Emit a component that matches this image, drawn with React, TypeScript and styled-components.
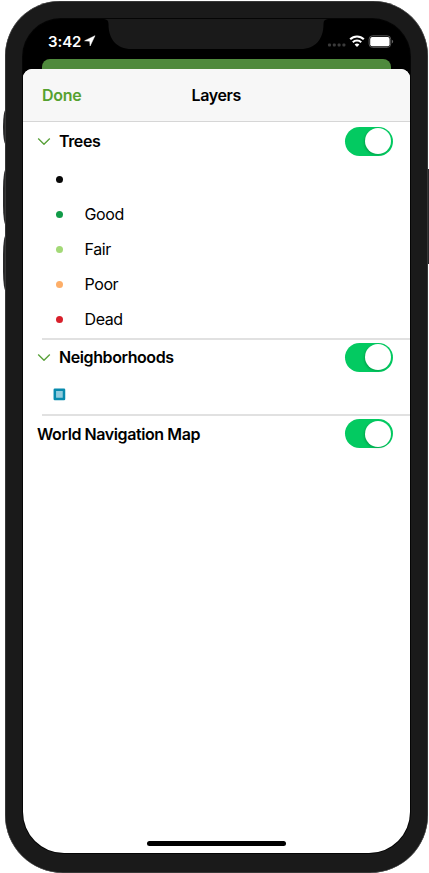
import React from "react";
import styled, { createGlobalStyle } from "styled-components";

const Global = createGlobalStyle`
  *, *::before, *::after { box-sizing: border-box; }
  body {
    margin: 0;
    background: #fff;
    font-family: Inter, "Liberation Sans", sans-serif;
    color: #000;
    overflow: hidden;
  }
`;

const Stage = styled.div`
  position: relative;
  width: 429px;
  height: 873px;
  padding: 1px 1px 0 5px;
  overflow: hidden;
`;

const SideButton = styled.span<{ $side: "left" | "right"; $top: number; $height: number }>`
  position: absolute;
  ${(p) => (p.$side === "left" ? "left: 3px;" : "right: 0;")}
  top: ${(p) => p.$top}px;
  width: 5px;
  height: ${(p) => p.$height}px;
  background: #29292a;
  border-radius: ${(p) => (p.$side === "left" ? "3px 0 0 3px / 20px 0 0 20px" : "0")};
`;

const Phone = styled.div`
  position: relative;
  height: 872px;
  padding: 18px 18.5px 19px 18px;
  background: #1a1a1a;
  border-radius: 55px 55px 58px 58px;
  box-shadow: inset 0 0 0 0.5px #555;
`;

const Screen = styled.div`
  position: relative;
  display: flex;
  flex-direction: column;
  height: 834px;
  background: #000;
  border-radius: 38px 38px 41px 41px;
  overflow: hidden;
  box-shadow: 0 0 0 1px #050505;
`;

const Notch = styled.svg`
  position: absolute;
  top: 0;
  left: 81px;
  width: 224px;
  height: 30px;
`;

const StatusBar = styled.div`
  display: flex;
  justify-content: space-between;
  height: 40px;
  padding: 14px 15.5px 0 25px;
  color: #fff;
`;

const Clock = styled.div`
  display: flex;
  align-items: center;
  gap: 3px;
  height: 16px;
  font-size: 15px;
  font-weight: 600;
  letter-spacing: -0.1px;
`;

const StatusIcons = styled.div`
  display: flex;
  align-items: center;
  height: 18px;
`;

const BackCard = styled.div`
  flex: none;
  height: 10px;
  margin: 0 18.5px 0 19px;
  background: #4f8a3c;
  border-radius: 8px 8px 0 0;
`;

const Sheet = styled.main`
  display: flex;
  flex: 1;
  flex-direction: column;
  background: #fff;
  border-radius: 9px 9px 0 0;
  overflow: hidden;
`;

const Header = styled.header`
  display: grid;
  grid-template-columns: 1fr auto 1fr;
  align-items: center;
  height: 53px;
  padding: 0 19px;
  background: #f7f7f7;
  border-bottom: 1px solid #d6d6d6;
  font-size: 16px;
  font-weight: 600;
`;

const DoneButton = styled.button`
  justify-self: start;
  padding: 0;
  border: 0;
  background: none;
  color: #56a12f;
  font: inherit;
  letter-spacing: -0.3px;
`;

const Title = styled.h1`
  margin: 0;
  font: inherit;
  letter-spacing: -0.4px;
`;

const Section = styled.section<{ $gap: number }>`
  padding-bottom: ${(p) => p.$gap}px;
`;

const LayerRow = styled.div<{ $height: number; $after?: number }>`
  display: flex;
  align-items: center;
  height: ${(p) => p.$height}px;
  margin-bottom: ${(p) => p.$after ?? 0}px;
  padding: 0 17px 0 14px;
`;

const LayerName = styled.h2`
  flex: 1;
  margin: 0;
  font-size: 16px;
  font-weight: 600;
  line-height: 20px;
  letter-spacing: -0.41px;
`;

const Chevron = styled.svg`
  width: 14px;
  height: 8px;
  margin-right: 8px;
`;

const Switch = styled.button`
  display: flex;
  justify-content: flex-end;
  align-items: center;
  width: 48px;
  height: 29px;
  padding: 0 1.5px;
  border: 0;
  border-radius: 15px;
  background: #03ca61;
`;

const Knob = styled.span`
  width: 26px;
  height: 26px;
  border-radius: 50%;
  background: #fff;
  box-shadow: -1px 1px 2px rgba(0, 60, 20, 0.25);
`;

const LegendRow = styled.div`
  display: flex;
  align-items: center;
  height: 35px;
  padding-left: 30px;
  font-size: 16px;
`;

const SymbolCell = styled.span`
  display: flex;
  justify-content: center;
  width: 13px;
  margin-right: 18.5px;
`;

const Dot = styled.span<{ $color: string }>`
  width: 7px;
  height: 7px;
  border-radius: 50%;
  background: ${(p) => p.$color};
`;

const Label = styled.span`
  padding-bottom: 2px;
  letter-spacing: -0.4px;
`;

const Divider = styled.hr`
  height: 2px;
  margin: 0 0 0 19px;
  border: 0;
  background: #e1e1e1;
`;

const HomeBar = styled.span`
  position: absolute;
  left: 124px;
  bottom: 7px;
  width: 139px;
  height: 5px;
  border-radius: 3px;
  background: #000;
`;

const legend = [
  { label: "", color: "#080808" },
  { label: "Good", color: "#119b48" },
  { label: "Fair", color: "#a3d977" },
  { label: "Poor", color: "#fdae68" },
  { label: "Dead", color: "#d8202b" },
];

const Toggle = ({ name }: { name: string }) => (
  <Switch role="switch" aria-checked="true" aria-label={name}>
    <Knob />
  </Switch>
);

const Expand = () => (
  <Chevron viewBox="0 0 14 8" fill="none" stroke="#59a13a" strokeWidth="1.35">
    <path d="M1.2 1.6 7 7.3l5.8-5.7" />
  </Chevron>
);

export default function App() {
  return (
    <Stage>
      <Global />
      <SideButton $side="left" $top={110} $height={34} />
      <SideButton $side="left" $top={169} $height={56} />
      <SideButton $side="left" $top={235} $height={56} />
      <SideButton $side="right" $top={169} $height={95} />
      <Phone>
        <Screen>
          <Notch viewBox="0 0 224 30">
            <path fill="#1a1a1a" d="M0 0c2.9.2 4.5 1.7 4.5 5 0 15 8 25 23 25h169c15 0 23-10 23-25 0-3.3 1.6-4.8 4.5-5z" />
          </Notch>
          <StatusBar>
            <Clock>
              3:42
              <svg width="12" height="12" viewBox="0 0 12 12" fill="#fff" stroke="#fff" strokeWidth="0.5" strokeLinejoin="round">
                <path d="M.6 5.8 11 .7 6.1 11 5.7 6.2z" />
              </svg>
            </Clock>
            <StatusIcons>
              <svg width="67" height="16" viewBox="0 0 67 16">
                <g fill="#3b3b3b">
                  <rect x="1" y="9.5" width="3" height="3" rx="1" />
                  <rect x="5.8" y="9.5" width="3" height="3" rx="1" />
                  <rect x="10.6" y="9.5" width="3" height="3" rx="1" />
                  <rect x="15.4" y="9.5" width="3" height="3" rx="1" />
                </g>
                <g fill="none" stroke="#fff" strokeWidth="2.1">
                  <path d="M23.2 5.3a9.6 9.6 0 0 1 13.6 0" />
                  <path d="M25.8 8.2a6 6 0 0 1 8.4 0" />
                </g>
                <path fill="#fff" d="M27.6 10.6a3.4 3.4 0 0 1 4.8 0L30 13z" />
                <rect x="42.1" y="1.8" width="21.6" height="11.6" rx="3.4" fill="none" stroke="#555" strokeWidth="1" />
                <rect x="43.2" y="2.9" width="19.4" height="9.4" rx="2" fill="#fff" />
                <path d="M64.9 5.8v3.6c1.7-.6 1.7-3 0-3.6z" fill="#666" />
              </svg>
            </StatusIcons>
          </StatusBar>
          <BackCard />
          <Sheet>
            <Header>
              <DoneButton>Done</DoneButton>
              <Title>Layers</Title>
            </Header>
            <Section $gap={1}>
              <LayerRow $height={38} $after={2}>
                <Expand />
                <LayerName>Trees</LayerName>
                <Toggle name="Trees" />
              </LayerRow>
              {legend.map((item) => (
                <LegendRow key={item.color}>
                  <SymbolCell>
                    <Dot $color={item.color} />
                  </SymbolCell>
                  <Label>{item.label}</Label>
                </LegendRow>
              ))}
            </Section>
            <Divider />
            <Section $gap={2}>
              <LayerRow $height={34} $after={3}>
                <Expand />
                <LayerName>Neighborhoods</LayerName>
                <Toggle name="Neighborhoods" />
              </LayerRow>
              <LegendRow>
                <SymbolCell>
                  <svg width="13" height="13" viewBox="0 0 13 13">
                    <rect x="1.8" y="1.8" width="9.2" height="9.2" fill="#90cbdd" stroke="#078aad" strokeWidth="2.5" strokeLinejoin="round" />
                  </svg>
                </SymbolCell>
              </LegendRow>
            </Section>
            <Divider />
            <LayerRow $height={35}>
              <LayerName>World Navigation Map</LayerName>
              <Toggle name="World Navigation Map" />
            </LayerRow>
          </Sheet>
          <HomeBar />
        </Screen>
      </Phone>
    </Stage>
  );
}
